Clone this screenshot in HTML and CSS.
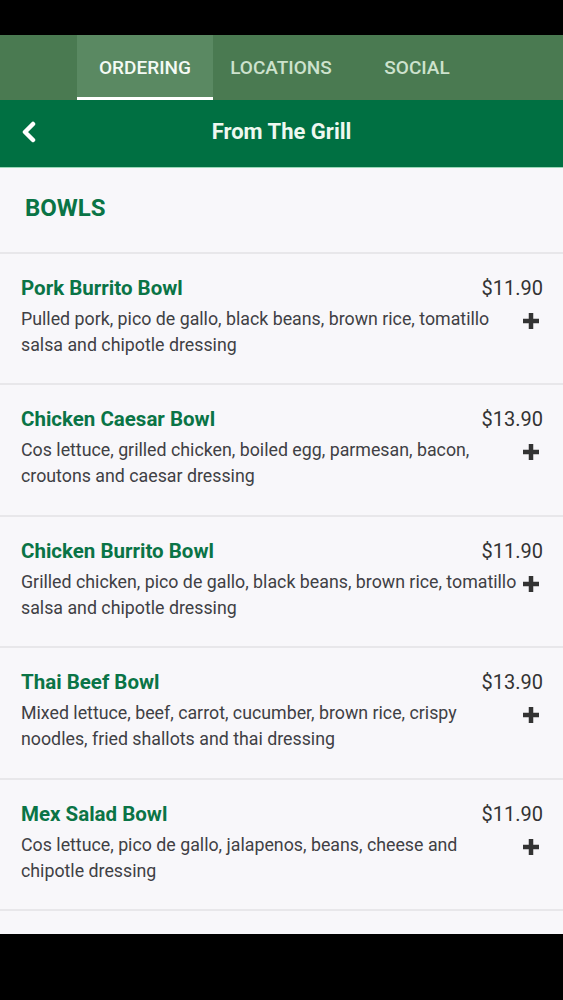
FILE: index.html
```html
<!DOCTYPE html>
<html>
<head>
<meta charset="utf-8">
<link rel="stylesheet" href="styles.css">
</head>
<body>
<div class="screen">
  <div class="statusbar"></div>
  <nav class="tabs">
    <div class="tab active">ORDERING</div>
    <div class="tab">LOCATIONS</div>
    <div class="tab">SOCIAL</div>
  </nav>
  <header class="header">
    <svg class="back" width="16" height="22" viewBox="0 0 16 22"><path d="M12 3 L4 11 L12 19" fill="none" stroke="#fff" stroke-width="4.5" stroke-linecap="round" stroke-linejoin="round"/></svg>
    <h1 class="title">From The Grill</h1>
  </header>
  <main class="content">
    <div class="section">BOWLS</div>
    <div class="item">
      <div class="row"><div class="name">Pork Burrito Bowl</div><div class="price">$11.90</div></div>
      <div class="row"><div class="desc">Pulled pork, pico de gallo, black beans, brown rice, tomatillo salsa and chipotle dressing</div><svg class="plus" width="18" height="18" viewBox="0 0 18 18"><path d="M9 1 V17 M1 9 H17" stroke="#333" stroke-width="4.5"/></svg></div>
    </div>
    <div class="item">
      <div class="row"><div class="name">Chicken Caesar Bowl</div><div class="price">$13.90</div></div>
      <div class="row"><div class="desc">Cos lettuce, grilled chicken, boiled egg, parmesan, bacon, croutons and caesar dressing</div><svg class="plus" width="18" height="18" viewBox="0 0 18 18"><path d="M9 1 V17 M1 9 H17" stroke="#333" stroke-width="4.5"/></svg></div>
    </div>
    <div class="item">
      <div class="row"><div class="name">Chicken Burrito Bowl</div><div class="price">$11.90</div></div>
      <div class="row"><div class="desc">Grilled chicken, pico de gallo, black beans, brown rice, tomatillo salsa and chipotle dressing</div><svg class="plus" width="18" height="18" viewBox="0 0 18 18"><path d="M9 1 V17 M1 9 H17" stroke="#333" stroke-width="4.5"/></svg></div>
    </div>
    <div class="item">
      <div class="row"><div class="name">Thai Beef Bowl</div><div class="price">$13.90</div></div>
      <div class="row"><div class="desc">Mixed lettuce, beef, carrot, cucumber, brown rice, crispy noodles, fried shallots and thai dressing</div><svg class="plus" width="18" height="18" viewBox="0 0 18 18"><path d="M9 1 V17 M1 9 H17" stroke="#333" stroke-width="4.5"/></svg></div>
    </div>
    <div class="item">
      <div class="row"><div class="name">Mex Salad Bowl</div><div class="price">$11.90</div></div>
      <div class="row"><div class="desc">Cos lettuce, pico de gallo, jalapenos, beans, cheese and chipotle dressing</div><svg class="plus" width="18" height="18" viewBox="0 0 18 18"><path d="M9 1 V17 M1 9 H17" stroke="#333" stroke-width="4.5"/></svg></div>
    </div>
    <div class="tail"></div>
  </main>
  <div class="navbar"></div>
</div>
</body>
</html>
```
FILE: styles.css
```css
* { box-sizing: border-box; margin: 0; padding: 0; }
html, body { width: 563px; height: 1000px; overflow: hidden; background: #000; }
body { font-family: Roboto, "Liberation Sans", sans-serif; }
.screen { display: flex; flex-direction: column; height: 1000px; }
.statusbar { height: 35px; background: #000; }
.tabs { height: 65px; background: #4a7a51; display: flex; padding-left: 77px; }
.tab { height: 65px; width: 136px; display: flex; align-items: center; justify-content: center; font-size: 19px; font-weight: 500; color: #cde2cd; }
.tab.active { background: #5a8962; color: #f4faf4; border-bottom: 3px solid #fff; padding-top: 3px; }
.header { height: 68px; background: #007042; display: flex; align-items: center; position: relative; border-bottom: 1px solid #9ad8b8; }
.back { position: absolute; left: 21px; top: 21px; }
.title { flex: 1; text-align: center; font-size: 22px; font-weight: 700; color: #eef8f0; padding-bottom: 4px; }
.content { background: #f8f7fa; flex: 1; display: flex; flex-direction: column; }
.section { height: 86px; display: flex; align-items: center; padding-left: 25px; padding-bottom: 4px; font-size: 24px; font-weight: 700; color: #0a7446; border-bottom: 2px solid #e8e7ea; }
.item { height: 131.4px; display: flex; flex-direction: column; padding: 22px 20px 0 21px; border-bottom: 2px solid #e8e7ea; }
.row { display: flex; justify-content: space-between; align-items: flex-start; }
.name { font-size: 20.5px; font-weight: 700; color: #0a7446; line-height: 24px; }
.price { font-size: 20px; color: #333; line-height: 24px; }
.desc { flex: 1; font-size: 17.8px; color: #404044; line-height: 26px; margin-top: 6px; }
.plus { flex: none; margin-top: 12px; margin-right: 3px; margin-left: 4px; }
.tail { flex: 1; }
.navbar { height: 66px; background: #000; }
```
